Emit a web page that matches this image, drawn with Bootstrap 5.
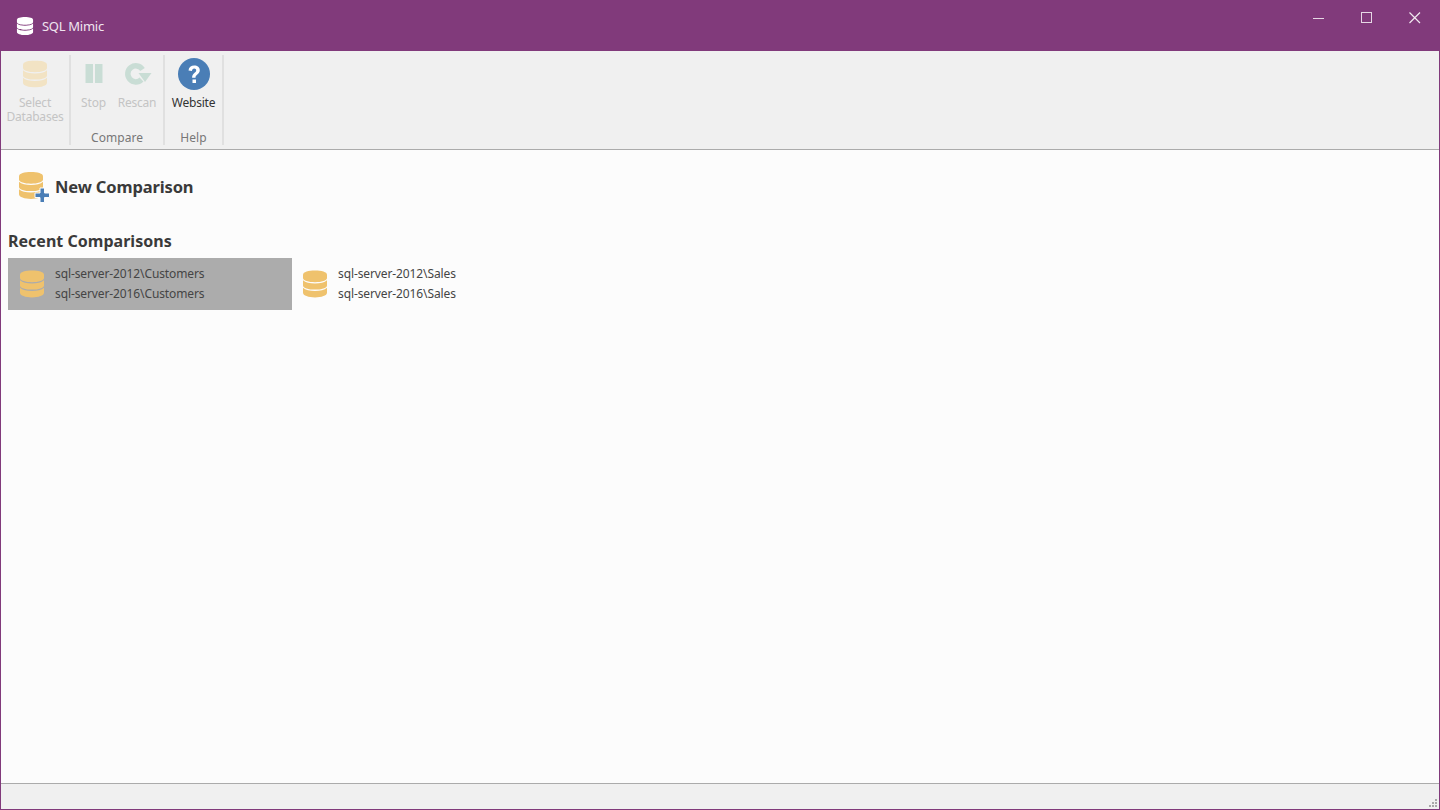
<!DOCTYPE html>
<html lang="en"><head><meta charset="utf-8"><title>SQL Mimic</title>
<link href="https://cdn.jsdelivr.net/npm/bootstrap@5.3.0/dist/css/bootstrap.min.css" rel="stylesheet">
<style>
html,body{height:100%;margin:0;overflow:hidden}
body{font-family:"Noto Sans","Open Sans",sans-serif;background:#fcfcfc;color:#3a3a3a}
.win{width:1440px;height:810px;border:1px solid #813a7b;border-top:0;display:flex;flex-direction:column}
.titlebar{height:51px;background:#813a7b;color:#f0e4ef;flex:none;padding-left:15px;font-size:13px}
.titlebar .ttl{margin-left:8px;letter-spacing:-.28px;padding-top:2px}
.winbtns{margin-left:auto;display:flex}
.winbtn{width:48px;height:36px;display:flex;align-items:center;justify-content:center;background:none;border:0;padding:0}
.ribbon{height:99px;flex:none;background:#f0f0f0;border-bottom:1px solid #ababab;padding-top:4px;display:flex}
.rgroup{height:90px;border-right:2px solid #e0e0e0;display:flex;flex-direction:column;align-items:center}
.g1{width:70px}.g2{width:94px}.g3{width:59px}
.ritems{display:flex;flex:1;width:100%}
.ritem{flex:1;display:flex;flex-direction:column;align-items:center;font-size:12px;line-height:14px;letter-spacing:-.2px;color:#c4c4c4;text-align:center;padding-top:3px}
.ritem svg{display:block;height:32px;margin-bottom:6px;flex:none}
.ritem.on{color:#333}
.ritem.rescan{padding-right:5px}
.rlabel{font-size:12px;letter-spacing:.03px;color:#777;line-height:14px;height:14px;margin-bottom:0}
.main{flex:1;background:#fcfcfc;padding-left:7px}
.newc{height:36px;margin-top:19px;padding-left:11px;gap:5px;font-size:16.5px;font-weight:700;color:#3a3a3a;letter-spacing:-.13px}
.rech{font-size:16px;font-weight:700;margin:24px 0 0 0;line-height:24px;letter-spacing:.02px;color:#3a3a3a}
.recents{margin-top:5px;gap:0}
.rec{width:284px;height:52px;display:flex;align-items:center;padding-left:12px;gap:11px;font-size:12px;line-height:20px;letter-spacing:-.11px;color:#454545}
.rec.alt{padding-left:11px}
.rec.sel{background:#acacac}
.statusbar{height:26px;flex:none;background:#f0f0f0;border-top:1px solid #ababab;display:flex;justify-content:flex-end;align-items:flex-end}
.grip{margin:0 1px 1px 0;display:block}
</style></head><body>
<svg width="0" height="0" class="position-absolute"><defs>
<symbol id="db" viewBox="0 0 26 29"><path d="M0 4.500C0 1.600 6 0 13 0s13 1.600 13 4.500V8c0 2.900-6 4.500-13 4.500S0 10.900 0 8z"/><path d="M0 10.500C2.500 13 7.500 14 13 14s10.500-1 13-3.500V16c0 2.900-6 4.500-13 4.500S0 18.900 0 16z"/><path d="M0 18.500C2.500 21 7.500 22 13 22s10.500-1 13-3.500V24c0 3-6 5-13 5S0 27 0 24z"/></symbol>
</defs></svg>
<div class="win">
 <div class="titlebar d-flex align-items-start">
  <div class="d-flex align-items-center" style="height:51px">
   <svg width="18" height="18" fill="#fff"><use href="#db"/></svg><span class="ttl">SQL Mimic</span>
  </div>
  <div class="winbtns">
   <button class="winbtn" aria-label="Minimize"><svg width="12" height="12"><path d="M0 6.500h11" stroke="#e6d8e5"/></svg></button>
   <button class="winbtn" aria-label="Maximize"><svg width="12" height="12"><rect x=".5" y=".5" width="10" height="10" fill="none" stroke="#e6d8e5"/></svg></button>
   <button class="winbtn" aria-label="Close"><svg width="12" height="12"><path d="M.5.500l10.500 10.500M11 .5L.5 11" stroke="#f0e8ef" stroke-width="1.200"/></svg></button>
  </div>
 </div>
 <div class="ribbon">
  <div class="rgroup g1"><div class="ritems"><div class="ritem"><svg width="24" viewBox="0 0 26 29" fill="#f2e3c4"><use href="#db"/></svg>Select<br>Databases</div></div></div>
  <div class="rgroup g2"><div class="ritems">
    <div class="ritem" style="flex:0 0 45px"><svg width="20" viewBox="0 0 20 32"><path d="M1.500 6h7.500v19H1.500zM11 6h7.500v19H11z" fill="#c9ddd5"/></svg>Stop</div>
    <div class="ritem rescan"><svg width="30" viewBox="0 0 30 32"><path d="M20.500 11.500A8 8 0 1 0 19.500 21.500" fill="none" stroke="#c9ddd5" stroke-width="5.500"/><path d="M16.500 15h13l-6.500 9z" fill="#c9ddd5"/></svg>Rescan</div>
   </div><div class="rlabel">Compare</div></div>
  <div class="rgroup g3"><div class="ritems"><div class="ritem on"><svg width="32" viewBox="0 0 32 32"><circle cx="16" cy="16" r="16" fill="#4a7eb6"/><path d="M10.500 12.500c.3-3.300 2.600-5 5.700-5 3.300 0 5.600 1.900 5.600 4.700 0 4-4.300 4-4.300 7.500h-3.400c0-5 4.100-4.800 4.100-7.300 0-1.100-.8-1.800-2-1.800-1.300 0-2.100.9-2.300 2.400zM14.500 21.500H18V25h-3.500z" fill="#fff"/></svg>Website</div></div><div class="rlabel">Help</div></div>
 </div>
 <div class="main">
  <div class="newc d-flex align-items-center">
   <svg width="31" height="31" viewBox="0 0 31 31"><use href="#db" width="24" height="27" fill="#efc26d"/><path d="M16 21h5v-5h4.500v5h5v4.500h-5v5H21v-5h-5z" fill="#4a7eb6" stroke="#fcfcfc"/></svg>
   <span>New Comparison</span>
  </div>
  <h2 class="rech">Recent Comparisons</h2>
  <div class="recents d-flex">
   <div class="rec sel"><svg width="24" height="28" fill="#efc26d"><use href="#db"/></svg><div>sql-server-2012\Customers<br>sql-server-2016\Customers</div></div>
   <div class="rec alt"><svg width="24" height="28" fill="#efc26d"><use href="#db"/></svg><div>sql-server-2012\Sales<br>sql-server-2016\Sales</div></div>
  </div>
 </div>
 <div class="statusbar"><svg class="grip" width="10" height="10" fill="#a8a8a8"><path d="M7 1h2v2H7zM4 4h2v2H4zM7 4h2v2H7zM1 7h2v2H1zM4 7h2v2H4zM7 7h2v2H7z"/></svg></div>
</div>
</body></html>
